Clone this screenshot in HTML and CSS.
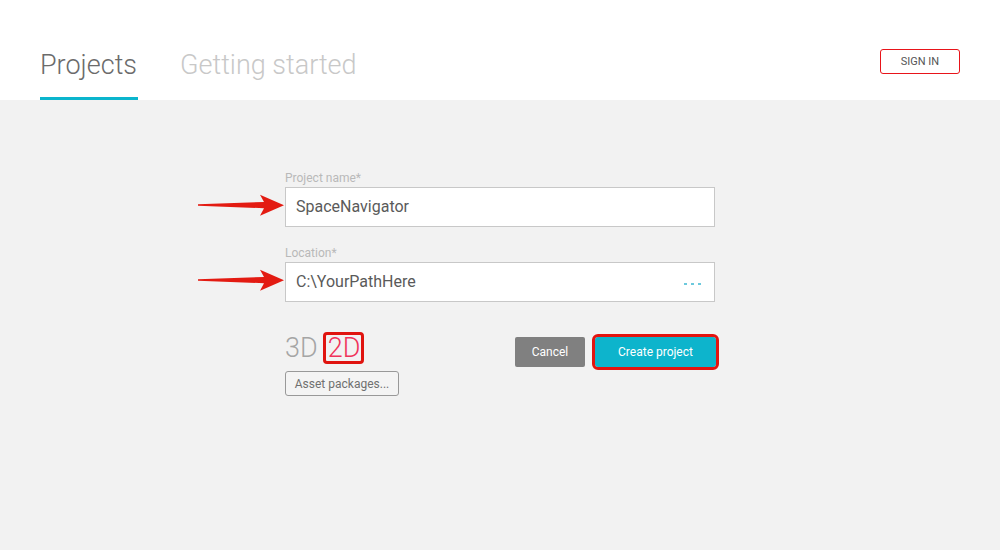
FILE: index.html
```html
<!DOCTYPE html>
<html>
<head>
<meta charset="utf-8">
<link rel="stylesheet" href="styles.css">
</head>
<body>
<header class="header">
  <nav class="tabs">
    <a class="tab tab-active">Projects</a>
    <a class="tab">Getting started</a>
  </nav>
  <button class="signin">SIGN IN</button>
</header>
<main class="main">
  <form class="form">
    <div class="field">
      <label class="label">Project name*</label>
      <div class="input">SpaceNavigator</div>
      <svg class="arrow" width="88" height="23" viewBox="0 0 88 23"><path d="M0 10.2 L66 8 L62 0.8 L86 11.2 L62 21.8 L66 14.2 L0 11.8 Z" fill="#e31b12"/></svg>
    </div>
    <div class="field">
      <label class="label">Location*</label>
      <div class="input">C:\YourPathHere<span class="dots"><i></i><i></i><i></i></span></div>
      <svg class="arrow" width="88" height="23" viewBox="0 0 88 23"><path d="M0 10.2 L66 8 L62 0.8 L86 11.2 L62 21.8 L66 14.2 L0 11.8 Z" fill="#e31b12"/></svg>
    </div>
    <div class="row">
      <div class="mode">
        <div class="dims"><span class="dim">3D</span><span class="dim dim-sel">2D</span></div>
        <button type="button" class="assets">Asset packages...</button>
      </div>
      <div class="actions">
        <button type="button" class="btn btn-cancel">Cancel</button>
        <button type="button" class="btn btn-create">Create project</button>
      </div>
    </div>
  </form>
</main>
</body>
</html>
```
FILE: styles.css
```css
* { box-sizing: border-box; }
html, body { margin: 0; padding: 0; }
body {
  background: #f2f2f2;
  font-family: Roboto, "Liberation Sans", sans-serif;
  width: 1000px;
  height: 550px;
  overflow: hidden;
}
.header {
  height: 100px;
  background: #fff;
  display: flex;
  justify-content: space-between;
  align-items: flex-end;
  padding: 0 40px;
}
.tabs { display: flex; gap: 42px; }
.tab {
  display: block;
  font-size: 27px;
  font-weight: 300;
  line-height: 34px;
  padding: 0 1px 15px 0;
  border-bottom: 3px solid transparent;
  color: #c8c8c8;
}
.tab-active {
  color: #6b6b6b;
  border-bottom-color: #0bb5cd;
}
.signin {
  align-self: flex-start;
  margin-top: 49px;
  width: 80px;
  height: 25px;
  border: 1px solid #e8141a;
  border-radius: 3px;
  background: #fff;
  color: #555;
  font-family: Roboto, "Liberation Sans", sans-serif;
  font-size: 11px;
  padding: 0;
}
.main { padding-top: 71px; }
.form { width: 430px; margin: 0 auto; }
.field { position: relative; margin-bottom: 19px; }
.label {
  display: block;
  font-size: 12px;
  line-height: 15px;
  color: #b9b9b9;
  margin-bottom: 1px;
}
.input {
  height: 40px;
  background: #fff;
  border: 1px solid #c8c8c8;
  padding: 0 13px 0 10px;
  font-size: 16px;
  line-height: 38px;
  color: #5a5a5a;
  display: flex;
  justify-content: space-between;
  align-items: center;
}
.dots { display: flex; gap: 4px; margin-top: 3px; }
.dots i { width: 3px; height: 2px; background: #6cc9dd; display: block; }
.arrow { position: absolute; left: -87px; top: 23px; }
.row {
  display: flex;
  justify-content: space-between;
  margin-top: 30px;
}
.mode { display: flex; flex-direction: column; align-items: flex-start; }
.dims { display: flex; align-items: center; height: 32px; gap: 5px; }
.dim {
  font-size: 27px;
  font-weight: 300;
  color: #a5a5a5;
  line-height: 26px;
}
.dim-sel {
  color: #f0325a;
  border: 3px solid #e0140f;
  border-radius: 4px;
  padding: 0 1px 0 2px;
  height: 32px;
  line-height: 26px;
}
.assets {
  margin-top: 7px;
  width: 114px;
  height: 25px;
  border: 1px solid #999;
  border-radius: 3px;
  background: #f4f4f4;
  color: #707070;
  font-family: Roboto, "Liberation Sans", sans-serif;
  font-size: 12px;
  padding: 0;
}
.actions { display: flex; gap: 10px; margin-top: 5px; align-items: flex-start; margin-right: -1px; }
.btn {
  height: 30px;
  border: none;
  border-radius: 2px;
  color: #fff;
  font-family: Roboto, "Liberation Sans", sans-serif;
  font-size: 12px;
  padding: 0;
}
.btn-cancel { width: 70px; background: #808080; }
.btn-create {
  width: 121px;
  background: #0db4cc;
  outline: 3px solid #e3140f;
  border-radius: 3px;
}
```
